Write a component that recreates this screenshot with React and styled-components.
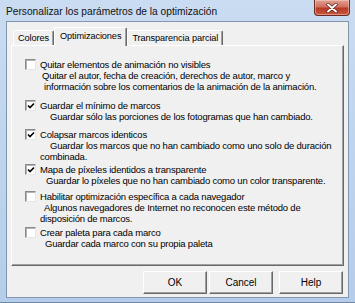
import React from "react";
import styled, { createGlobalStyle } from "styled-components";

const GlobalStyle = createGlobalStyle`
  html, body {
    margin: 0;
    padding: 0;
    background: #b9d1ec;
  }
  body {
    font-family: "Liberation Sans", Arial, sans-serif;
    font-size: 9px;
    color: #000;
  }
`;

const options = [
  {
    label: "Quitar elementos de animación no visibles",
    checked: false,
    gap: 0,
    lines: [
      { text: "Quitar el autor, fecha de creación, derechos de autor, marco y", indent: 2 },
      { text: "información sobre los comentarios de la animación de la animación.", indent: 4 },
    ],
  },
  {
    label: "Guardar el mínimo de marcos",
    checked: true,
    gap: 8,
    lines: [{ text: "Guardar sólo las porciones de los fotogramas que han cambiado.", indent: 10 }],
  },
  {
    label: "Colapsar marcos identicos",
    checked: true,
    gap: 7,
    lines: [
      { text: "Guardar los marcos que no han cambiado como uno solo de duración", indent: 10 },
      { text: "combinada.", indent: 0 },
    ],
  },
  {
    label: "Mapa de píxeles identidos a transparente",
    checked: true,
    gap: 2,
    lines: [{ text: "Guardar lo píxeles que no han cambiado como un color transparente.", indent: 6 }],
  },
  {
    label: "Habilitar optimización específica a cada navegador",
    checked: false,
    gap: 5,
    lines: [
      { text: "Algunos navegadores de Internet no reconocen este método de", indent: 4 },
      { text: "disposición de marcos.", indent: 0 },
    ],
  },
  {
    label: "Crear paleta para cada marco",
    checked: false,
    gap: 3,
    lines: [{ text: "Guardar cada marco con su propia paleta", indent: 5 }],
  },
];

const tabs = ["Colores", "Optimizaciones", "Transparencia parcial"];

function App() {
  return (
    <>
      <GlobalStyle />
      <Window>
        <TitleBar>
          <Title>Personalizar los parámetros de la optimización</Title>
          <CloseButton>
            <svg width="14" height="10" viewBox="0 0 14 10">
              <path d="M3 1.5 L11 8.5 M11 1.5 L3 8.5" stroke="#5a1a14" strokeWidth="3.4" strokeLinecap="round" />
              <path d="M3 1.5 L11 8.5 M11 1.5 L3 8.5" stroke="#fff" strokeWidth="2" strokeLinecap="round" />
            </svg>
          </CloseButton>
        </TitleBar>
        <Client>
          <TabStrip>
            {tabs.map((t, i) => (
              <Tab key={t} active={i === 1}>
                {t}
              </Tab>
            ))}
          </TabStrip>
          <Panel>
            {options.map((o) => (
              <Row key={o.label} gap={o.gap}>
                <CheckBox>
                  {o.checked && (
                    <svg width="8" height="8" viewBox="0 0 8 8">
                      <path d="M1 3.5 L3 5.5 L7 1.5" stroke="#000" strokeWidth="1.6" fill="none" />
                    </svg>
                  )}
                </CheckBox>
                <TextCol>
                  <Label>{o.label}</Label>
                  {o.lines.map((l) => (
                    <Line key={l.text} indent={l.indent}>
                      {l.text}
                    </Line>
                  ))}
                </TextCol>
              </Row>
            ))}
          </Panel>
          <ButtonRow>
            <Button>OK</Button>
            <Button space={2}>Cancel</Button>
            <Button space={6}>Help</Button>
          </ButtonRow>
        </Client>
      </Window>
    </>
  );
}

const Window = styled.div`
  width: 355px;
  height: 303px;
  box-sizing: border-box;
  display: flex;
  flex-direction: column;
  background: linear-gradient(180deg, #cadcf1 0%, #c0d6ef 40%, #b5cdea 100%);
  border-bottom: 1px solid #6f88a8;
`;

const TitleBar = styled.div`
  height: 21px;
  display: flex;
  align-items: flex-start;
  justify-content: space-between;
  flex-shrink: 0;
`;

const Title = styled.div`
  font-size: 10.2px;
  color: #111;
  padding: 6px 0 0 6px;
  line-height: 12px;
`;

const CloseButton = styled.div`
  width: 36px;
  height: 16px;
  margin-right: 5px;
  box-sizing: border-box;
  border: 1px solid #6b2a24;
  border-top: none;
  border-radius: 0 0 4px 4px;
  background: linear-gradient(180deg, #e0a094 0%, #d0705f 45%, #b83a26 55%, #c9583f 100%);
  box-shadow: inset 0 0 0 1px rgba(255, 220, 210, 0.45);
  display: flex;
  align-items: center;
  justify-content: center;
`;

const Client = styled.div`
  flex: 1;
  margin: 0 6px 4px 6px;
  background: #f0f0f0;
  border: 1px solid #8296b0;
  padding: 5px 4px 0 4px;
  display: flex;
  flex-direction: column;
`;

const TabStrip = styled.div`
  display: flex;
  align-items: flex-end;
  height: 18px;
  padding-left: 2px;
  position: relative;
  z-index: 1;
`;

const Tab = styled.div`
  height: ${(p) => (p.active ? "19px" : "15px")};
  margin-bottom: ${(p) => (p.active ? "-1px" : "0")};
  padding: ${(p) => (p.active ? "2px 5px 0" : "1px 4px 0")};
  box-sizing: border-box;
  background: #f0f0f0;
  border-top: 1px solid #fff;
  border-left: 1px solid #fff;
  border-right: 1px solid #696969;
  border-radius: 2px 2px 0 0;
  box-shadow: inset -1px 0 0 #a0a0a0;
  font-size: 9.2px;
  letter-spacing: -0.1px;
  line-height: 12px;
  white-space: nowrap;
`;

const Panel = styled.div`
  height: 221px;
  box-sizing: border-box;
  border-top: 1px solid #fff;
  border-left: 1px solid #fff;
  border-right: 1px solid #696969;
  border-bottom: 1px solid #696969;
  box-shadow: inset -1px -1px 0 #a0a0a0;
  padding: 13px 0 0 13px;
  display: flex;
  flex-direction: column;
`;

const Row = styled.div`
  display: flex;
  align-items: flex-start;
  gap: 4px;
  margin-top: ${(p) => p.gap}px;
`;

const CheckBox = styled.div`
  width: 11px;
  height: 11px;
  margin-top: 0;
  flex-shrink: 0;
  box-sizing: border-box;
  background: #fff;
  border: 1px solid;
  border-color: #8a8a8a #e6e6e6 #e6e6e6 #8a8a8a;
  box-shadow: inset 1px 1px 0 #b4b4b4;
  display: flex;
  align-items: center;
  justify-content: center;
`;

const TextCol = styled.div`
  display: flex;
  flex-direction: column;
`;

const Label = styled.div`
  font-size: 9.5px;
  line-height: 11px;
  white-space: nowrap;
  letter-spacing: -0.2px;
`;

const Line = styled.div`
  font-size: 9.5px;
  line-height: 11px;
  white-space: nowrap;
  letter-spacing: -0.2px;
  padding-left: ${(p) => p.indent}px;
`;

const ButtonRow = styled.div`
  display: flex;
  justify-content: flex-end;
  margin-top: 5px;
  padding-right: 1px;
`;

const Button = styled.div`
  width: 64px;
  height: 23px;
  margin-left: ${(p) => p.space || 0}px;
  box-sizing: border-box;
  background: #f0f0f0;
  border: 1px solid;
  border-color: #fff #696969 #696969 #fff;
  box-shadow: inset -1px -1px 0 #a0a0a0;
  display: flex;
  align-items: center;
  justify-content: center;
  font-size: 10px;
`;

export default App;
